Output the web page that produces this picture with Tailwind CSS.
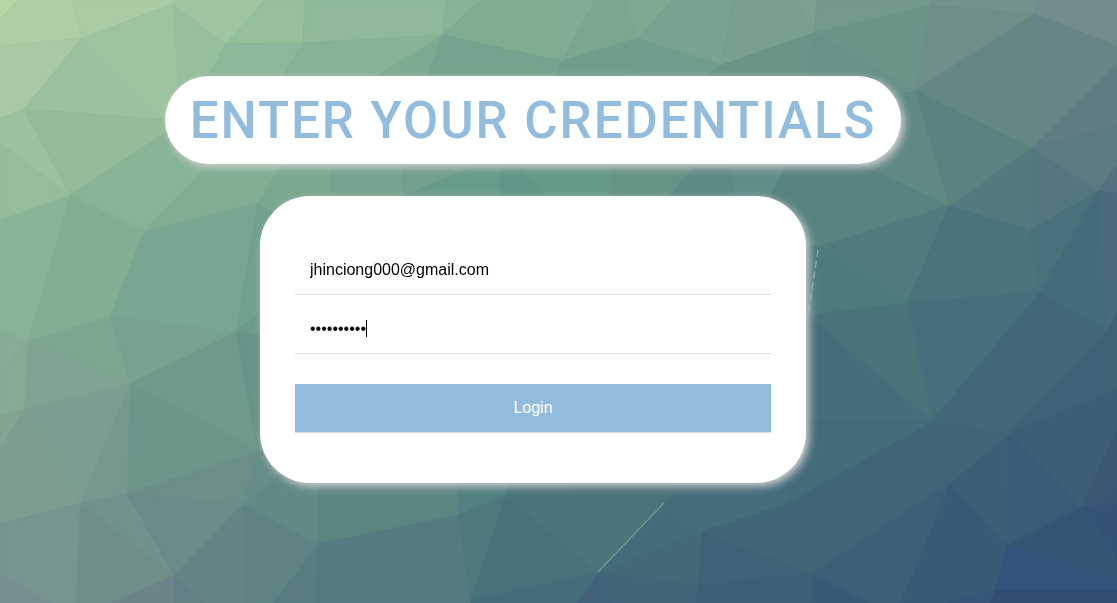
<!DOCTYPE html>
<html lang="en">
<head>
<meta charset="utf-8">
<meta name="viewport" content="width=device-width, initial-scale=1">
<title>Login</title>
<script src="https://cdn.jsdelivr.net/npm/@tailwindcss/browser@4"></script>
</head>
<body class="min-h-screen bg-[#578380] font-['Liberation_Sans',sans-serif]">
<svg class="fixed inset-0 -z-10 h-full w-full" viewBox="0 0 1117 603" preserveAspectRatio="xMidYMid slice" aria-hidden="true">
<rect width="1117" height="603" fill="#578380"/>
<g id="mesh" stroke-width="0.6" stroke-linejoin="round"></g>
<path d="M664 503L598 572" stroke="#6d9a98" stroke-width="1.3" fill="none"/>
<path d="M818 250L808 315" stroke="#7fa8a5" stroke-width="1.3" stroke-dasharray="7 4" fill="none"/>
</svg>
<main class="flex flex-col items-center gap-8 pt-[76px] pr-[51px] pb-10">
<h1 class="rounded-[50px] bg-white px-[25px] pt-4 pb-[14px] font-[Roboto,sans-serif] text-[51px] leading-[58px] font-medium tracking-[2px] text-[#92bcdd] shadow-[3px_3px_8px_#d3d3d3]">ENTER YOUR CREDENTIALS</h1>
<form class="flex w-full max-w-[546px] flex-col rounded-[50px] bg-white px-[35px] py-[50px] shadow-[3px_3px_8px_#d3d3d3]">
<input type="email" aria-label="Email" value="jhinciong000@gmail.com" class="h-[49px] w-full border-b border-[#dddddd] px-[15px] text-base text-black outline-none">
<div class="relative mt-[10px]">
<input type="password" aria-label="Password" value="abcdefghij" autofocus class="h-[49px] w-full border-b border-[#dddddd] px-[15px] text-base text-black caret-transparent outline-none">
<span class="absolute top-[15px] left-[71px] h-[17px] w-px bg-black"></span>
</div>
<button type="button" class="mt-[30px] h-[49px] w-full border-b border-[#dddddd] bg-[#92bcdd] text-base text-white">Login</button>
</form>
</main>
<script>
// Each row: fill colour, then the corner points of one facet.
const facets = `
b7d7a6 0,0 18,0 0,20
aecfa5 18,0 73,0 82,38 0,46 0,20
aacba3 73,0 178,0 173,4 82,38
a8c9a3 82,38 24,109 0,118 0,46
9bc19f 82,38 24,109 170,120
9dc49e 82,38 173,4 178,75 178,130 165,119
96bf9d 173,4 226,44 200,92 178,92
a0c5a0 178,0 173,4 226,44 265,0
96bf9c 226,44 265,0 305,0 303,43
8fb998 303,43 305,0 447,0 442,35
8db799 226,44 303,43 280,80 205,80
87b296 303,43 442,35 375,80 280,80
88b396 442,35 481,0 447,0
80ac91 442,35 481,0 560,0 562,61
74a48d 442,35 562,61 553,80 425,80
7dab92 442,35 425,80 370,80
82ab94 562,61 560,0 595,0
7ba78f 562,61 595,0 625,0 638,38
80a993 638,38 625,0 672,0
6f9f8b 562,61 638,38 630,80 553,80
6f9d8b 638,38 722,65 700,80 630,80
79a28f 638,38 672,0 733,0 722,65
799f8f 722,65 733,0 797,0 814,33
6a9487 722,65 814,33 807,80 700,80
7ba191 814,33 797,0 817,0
74998d 814,33 817,0 930,0 930,5
6b9387 814,33 930,5 915,91
689188 814,33 915,91 880,110 807,80
73928b 930,5 930,0 1041,0 1034,14
6e8e87 930,5 1034,14 915,91
738b8b 1034,14 1041,0 1117,0 1117,46
678487 1034,14 1117,46 1117,64 1032,148
658784 1034,14 915,91 1032,148
5f7d83 1032,148 1117,64 1117,125
5b7a82 1032,148 1117,125 1117,165 1098,191
56717f 1098,191 1117,165 1117,193
54777f 1032,148 1098,191 1030,230
54797f 1032,148 1030,230 949,206
5a8281 915,91 949,206 1032,148
608983 915,91 949,206 877,172 850,160 870,100
578380 780,150 877,172 949,206 820,246 780,260
4f7b7e 820,246 949,206 907,303
4b7b7a 820,246 907,303 800,318 800,246
4a737c 949,206 907,303 1040,292
4a747b 949,206 1030,230 1040,292
48717c 1030,230 1098,191 1040,292
446b7b 1098,191 1040,292 1107,330
496b7c 1098,191 1117,193 1117,312 1107,330
466f7b 907,303 1040,292 932,421
487479 907,303 932,421 820,325 800,316
456e7a 800,318 820,325 932,421 800,421
426778 1040,292 932,421 1008,434 1107,330
3f6376 1107,330 1117,312 1117,390 1008,434
3c5f76 1008,434 1117,390 1117,430 1081,507
3b5872 1081,507 1117,430 1117,487
395674 1081,507 1117,487 1117,504
345276 1081,507 1117,504 1117,557
345676 1007,545 1081,507 1117,557 1117,582
32547a 1007,545 1117,582 1117,590 994,590
304d74 994,590 1117,590 1117,603 990,603
385c76 1008,434 1081,507 1007,545
3c5f76 1008,434 1007,545 950,483
395a75 950,483 1007,545 994,590 945,603 900,603
37567a 994,590 990,603 945,603
3f6577 932,421 1008,434 950,483
3f6577 787,503 932,421 950,483 812,573
436c78 932,421 780,421 780,490 787,503
3d6076 812,573 950,483 900,603 870,603
395a76 812,573 870,603 812,603
3d6077 698,584 812,573 812,603 695,603
3f6376 701,531 812,573 698,584
416777 701,531 787,503 812,573
446b78 664,503 701,531 598,572
456e7a 664,503 680,480 785,480 787,503 701,531
436977 598,572 701,531 698,584
426578 598,572 698,584 695,603 612,603
41637a 598,572 612,603 576,603
446d7a 470,600 598,572 576,603 470,603
47727a 505,495 470,600 598,572
4a767b 505,495 510,480 568,480 598,572
48747a 568,480 680,480 664,503 598,572
4d797d 458,515 505,495 470,600
518080 458,515 459,480 510,480 505,495
5b8581 318,544 318,480 459,480 458,515
557a80 318,544 458,515 470,603 316,603
587c80 318,544 316,603 273,603
5f8384 243,504 318,544 273,603 244,603
628a85 243,504 273,480 318,480 318,544
668d87 258,451 243,504 280,475
648586 174,575 243,504 244,603 205,603
647f85 174,575 205,603 175,603
6b8389 174,575 175,603 110,603
708e88 80,503 174,575 110,603 76,603
6f938b 80,503 127,493 174,575
698c89 127,493 243,504 174,575
6b8f87 127,493 258,451 243,504
6f998b 130,383 236,332 258,451
6c968a 130,383 258,451 127,493
689389 236,332 258,451 270,451 270,330
749a90 80,503 127,493 130,383
7a9e90 24,409 130,383 80,503
7d9d8f 0,449 24,409 80,503 0,524
77948f 0,524 80,503 76,603 50,603 0,575
76908f 0,575 50,603 0,603
85a391 0,416 24,409 0,449
7fa391 28,341 130,383 24,409
85aa95 0,372 28,341 24,409 0,416
87ad99 0,330 28,341 0,372
7ca68f 28,341 110,316 130,383
77a28f 110,316 236,332 130,383
79a690 144,231 258,203 236,332 110,316
84ae94 70,195 144,231 110,316 28,341
8ab497 0,220 70,195 28,341 0,330
95bd9c 0,143 70,195 0,220
9bc29e 0,118 24,109 70,195 0,143
94bc9b 24,109 170,120 170,130 70,195
89b396 70,195 170,130 215,160 144,231
82ad93 144,231 215,160 285,160 258,203
7aa78f 258,203 285,160 330,160 330,205 270,212
76a38e 330,160 403,160 403,200 330,200
71a08c 403,160 490,160 403,196
679b89 403,196 490,160 501,160 501,200 403,200
5f9586 501,160 512,160 550,200 501,200
639985 512,160 612,160 612,200 550,200
639385 612,160 701,160 665,200 612,200
5b8b84 701,160 732,160 735,200 665,200
5f8d87 732,160 787,160 769,200 735,200
6fa18d 258,203 270,212 270,304 236,332
6b9b8b 236,332 270,304 270,335`;
const mesh = document.getElementById('mesh');
for (const row of facets.trim().split('\n')) {
  const [colour, ...points] = row.split(' ');
  const p = document.createElementNS('http://www.w3.org/2000/svg', 'polygon');
  p.setAttribute('points', points.join(' '));
  p.setAttribute('fill', '#' + colour);
  p.setAttribute('stroke', '#' + colour);
  mesh.appendChild(p);
}
</script>
</body>
</html>
